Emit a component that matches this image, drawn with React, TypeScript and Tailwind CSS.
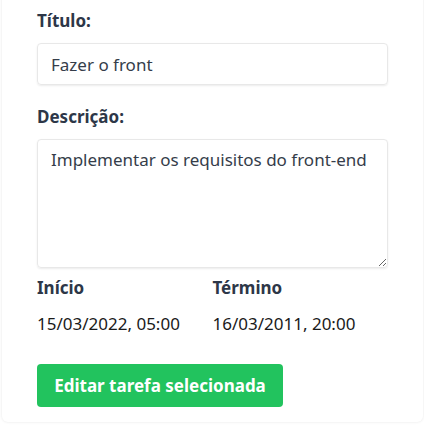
export default function App() {
  return (
    <div className="h-[425px] overflow-hidden bg-white font-['Noto_Sans',sans-serif]">
      <div className="-mt-[8px] ml-[2px] w-[421px] rounded-md bg-white px-[35px] pt-[15px] pb-[15px] shadow-[0_0_3px_rgba(0,0,0,0.1)]">
        <form className="flex flex-col">
          <label className="text-[17px] leading-7 font-bold text-[#2d3748]">Título:</label>
          <input
            type="text"
            defaultValue="Fazer o front"
            className="mt-2 h-[42px] w-full rounded border border-[#e8e8e8] px-[13px] text-[17px] text-[#353d4a] shadow-[0_1px_2px_rgba(0,0,0,0.08)] outline-none"
          />
          <label className="mt-[18px] text-[17px] leading-7 font-bold text-[#2d3748]">Descrição:</label>
          <textarea
            defaultValue="Implementar os requisitos do front-end"
            className="mt-2 h-[129px] w-full rounded border border-[#e8e8e8] px-[13px] py-[6px] text-[17px] leading-7 text-[#353d4a] shadow-[0_1px_2px_rgba(0,0,0,0.08)] outline-none"
          />
          <div className="mt-[6px] grid grid-cols-2">
            <div>
              <div className="text-[17px] leading-7 font-bold text-[#2d3748]">Início</div>
              <div className="mt-2 text-[17px] leading-7 text-[#1a1a1a]">15/03/2022, 05:00</div>
            </div>
            <div>
              <div className="text-[17px] leading-7 font-bold text-[#2d3748]">Término</div>
              <div className="mt-2 text-[17px] leading-7 text-[#1a1a1a]">16/03/2011, 20:00</div>
            </div>
          </div>
          <div className="mt-[26px]">
            <button
              type="button"
              className="h-[43px] w-[246px] rounded bg-[#22c35e] text-[17px] font-bold text-white"
            >
              Editar tarefa selecionada
            </button>
          </div>
        </form>
      </div>
    </div>
  )
}
